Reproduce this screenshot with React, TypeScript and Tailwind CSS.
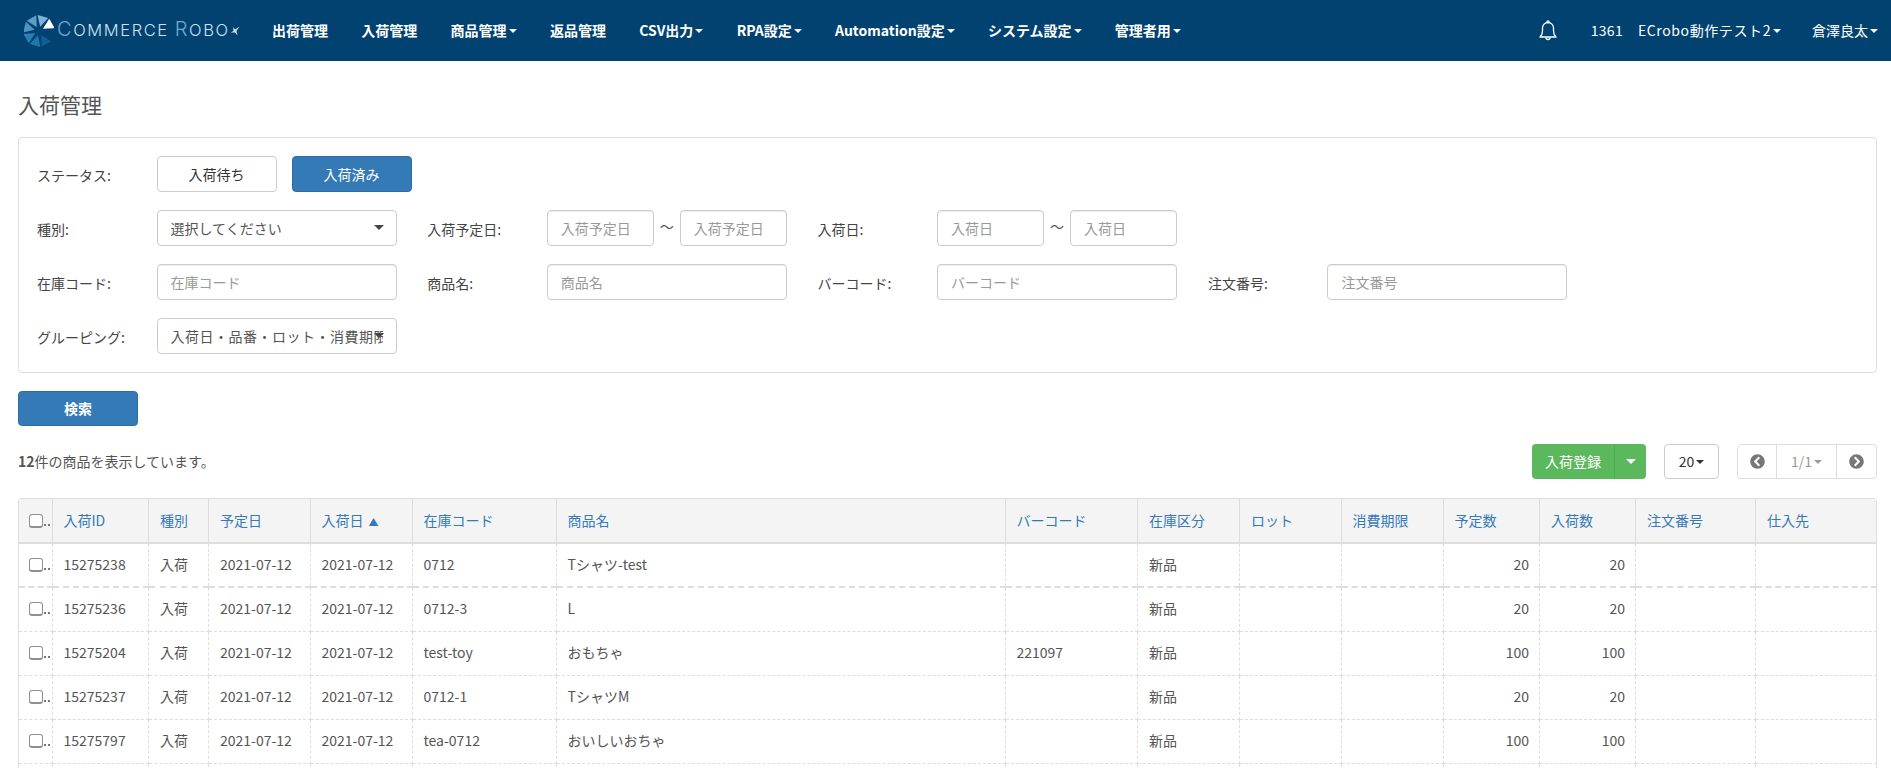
import React from "react";
import { FaChevronCircleLeft, FaChevronCircleRight } from "react-icons/fa";

const menus = [
  { label: "出荷管理" },
  { label: "入荷管理" },
  { label: "商品管理", caret: true },
  { label: "返品管理" },
  { label: "CSV出力", caret: true },
  { label: "RPA設定", caret: true },
  { label: "Automation設定", caret: true },
  { label: "システム設定", caret: true },
  { label: "管理者用", caret: true },
];

const columns = [
  { label: "", width: "w-[33px]" },
  { label: "入荷ID", width: "w-[96.5px]" },
  { label: "種別", width: "w-[60px]" },
  { label: "予定日", width: "w-[101.5px]" },
  { label: "入荷日", width: "w-[102px]", sorted: true },
  { label: "在庫コード", width: "w-[144px]" },
  { label: "商品名", width: "w-[449px]" },
  { label: "バーコード", width: "w-[132.5px]" },
  { label: "在庫区分", width: "w-[102px]" },
  { label: "ロット", width: "w-[101.5px]" },
  { label: "消費期限", width: "w-[102px]" },
  { label: "予定数", width: "w-[96.5px]" },
  { label: "入荷数", width: "w-[96px]" },
  { label: "注文番号", width: "w-[120px]" },
  { label: "仕入先", width: "w-[121px]" },
];

const rows = [
  { id: "15275238", code: "0712", name: "Tシャツ-test", barcode: "", planned: 20, received: 20 },
  { id: "15275236", code: "0712-3", name: "L", barcode: "", planned: 20, received: 20 },
  { id: "15275204", code: "test-toy", name: "おもちゃ", barcode: "221097", planned: 100, received: 100 },
  { id: "15275237", code: "0712-1", name: "TシャツM", barcode: "", planned: 20, received: 20 },
  { id: "15275797", code: "tea-0712", name: "おいしいおちゃ", barcode: "", planned: 100, received: 100 },
];

const Caret = ({ className = "border-t-white" }: { className?: string }) => (
  <span className={`ml-[2px] inline-block h-0 w-0 border-x-[4px] border-t-[4px] border-x-transparent ${className}`} />
);

const Logo = () => {
  const wedges = [
    { angle: 15, color: "#7fb2d8" },
    { angle: 60, color: "#ffffff" },
    { angle: 150, color: "#0f5f92" },
    { angle: 195, color: "#1f78ab" },
    { angle: 240, color: "#2a7fb4" },
    { angle: 285, color: "#4f93c2" },
    { angle: 330, color: "#5f9cc8" },
  ];
  return (
    <div className="flex w-[216px] shrink-0 items-center">
      <svg width="30" height="32" viewBox="-15 -16 30 32" className="shrink-0">
        {wedges.map((w) => (
          <polygon key={w.angle} points="0,-4.5 -5.5,-15 5.5,-15" fill={w.color} transform={`rotate(${w.angle})`} />
        ))}
      </svg>
      <div className="ml-[3px] flex items-baseline font-['Inter',sans-serif] text-[16.5px] font-light tracking-[1.6px] whitespace-nowrap text-[#cfe1ee]">
        <span className="text-[20px] text-[#6fa9d2]">C</span>
        <span>OMMERCE</span>
        <span className="ml-[6px] text-[20px] text-[#6fa9d2]">R</span>
        <span>OBO</span>
        <svg width="10" height="10" viewBox="0 0 10 10" className="mb-[12px]">
          <path d="M5 3.5 L9.5 .5 L6.5 5 L7.5 9.5 L5 6.5 L.5 6.5 L3.5 5 L3 1Z" fill="#cfe1ee" />
        </svg>
      </div>
    </div>
  );
};

const Bell = () => (
  <svg width="18" height="21" viewBox="0 0 18 21" fill="none" stroke="white" strokeWidth="1.3">
    <path d="M1 17c1.7-1.6 2.5-3.2 2.5-6V8a5.5 5.5 0 0 1 11 0v3c0 2.8.8 4.4 2.5 6z" strokeLinejoin="round" />
    <circle cx="9" cy="1.8" r="1" />
    <path d="M7 17.5a2 2 0 0 0 4 0" />
  </svg>
);

const Navbar = () => (
  <nav className="flex h-[61px] items-center bg-[#024270] pr-[13px] pl-[24px] text-[14px] font-bold whitespace-nowrap text-white">
    <Logo />
    <ul className="ml-[32px] flex items-center gap-[33.3px]">
      {menus.map((m) => (
        <li key={m.label} className="flex items-center">
          {m.label}
          {m.caret && <Caret />}
        </li>
      ))}
    </ul>
    <div className="ml-auto flex items-center font-normal">
      <Bell />
      <span className="ml-[34px] tracking-[0.3px]">1361</span>
      <span className="ml-[15px] flex items-center tracking-[0.6px]">
        ECrobo動作テスト2
        <Caret />
      </span>
      <span className="ml-[31px] flex items-center">
        倉澤良太
        <Caret />
      </span>
    </div>
  </nav>
);

const Field = ({ label, children }: { label: string; children?: React.ReactNode }) => (
  <div className="flex items-center">
    <label className="w-[119.5px] shrink-0 pt-[2px] text-[#444]">{label}</label>
    <div className="flex w-[240px] items-center">{children}</div>
  </div>
);

const inputClass =
  "h-[36px] w-full min-w-0 rounded-[4px] border border-[#ccc] bg-white px-[13px] text-[14px] text-[#555] shadow-[inset_0_1px_1px_rgba(0,0,0,0.075)] outline-none placeholder:text-[#999]";

const TextInput = ({ placeholder }: { placeholder: string }) => (
  <input className={inputClass} placeholder={placeholder} readOnly />
);

const DateRange = ({ placeholder }: { placeholder: string }) => (
  <>
    <TextInput placeholder={placeholder} />
    <span className="w-[26px] shrink-0 pb-[3px] text-center text-[#555]">〜</span>
    <TextInput placeholder={placeholder} />
  </>
);

const SelectBox = ({ value, textClass = "" }: { value: string; textClass?: string }) => (
  <div className="relative flex h-[36px] w-full items-center rounded-[4px] border border-[#ccc] bg-white pl-[13px] text-[#555]">
    <span className={`w-[212px] overflow-hidden whitespace-nowrap ${textClass}`}>{value}</span>
    <span className="absolute top-[14px] right-[12px] h-0 w-0 border-x-[5px] border-t-[5px] border-x-transparent border-t-[#444]" />
  </div>
);

const SearchPanel = () => (
  <div className="rounded-[4px] border border-[#ddd] pt-[18px] pr-[19px] pb-[18px] pl-[18px]">
    <div className="grid grid-cols-[repeat(4,390.3px)] gap-y-[18px]">
      <div className="col-span-4 flex items-center">
        <label className="w-[119.5px] shrink-0 pt-[2px] text-[#444]">ステータス:</label>
        <button className="h-[36px] w-[120px] rounded-[4px] border border-[#ccc] bg-white text-[#333]">入荷待ち</button>
        <button className="ml-[15px] h-[36px] w-[120px] rounded-[4px] border border-[#2e6da4] bg-[#337ab7] text-white">入荷済み</button>
      </div>
      <Field label="種別:">
        <SelectBox value="選択してください" />
      </Field>
      <Field label="入荷予定日:">
        <DateRange placeholder="入荷予定日" />
      </Field>
      <Field label="入荷日:">
        <DateRange placeholder="入荷日" />
      </Field>
      <div />
      <Field label="在庫コード:">
        <TextInput placeholder="在庫コード" />
      </Field>
      <Field label="商品名:">
        <TextInput placeholder="商品名" />
      </Field>
      <Field label="バーコード:">
        <TextInput placeholder="バーコード" />
      </Field>
      <Field label="注文番号:">
        <TextInput placeholder="注文番号" />
      </Field>
      <Field label="グルーピング:">
        <SelectBox value="入荷日・品番・ロット・消費期限" textClass="tracking-[0.5px]" />
      </Field>
    </div>
  </div>
);

const Toolbar = () => (
  <div className="mt-[18px] flex h-[35px] items-center">
    <span className="text-[#555]">
      <b>12</b>件の商品を表示しています。
    </span>
    <div className="ml-auto flex h-full items-stretch">
      <div className="flex w-[114px] overflow-hidden rounded-[4px] bg-[#5cb85c] text-white">
        <span className="flex w-[83px] items-center justify-center border-r border-[#4cae4c]">入荷登録</span>
        <span className="flex flex-1 items-center justify-center">
          <span className="h-0 w-0 border-x-[5px] border-t-[5px] border-x-transparent border-t-white" />
        </span>
      </div>
      <div className="ml-[18px] flex w-[55px] items-center justify-center rounded-[4px] border border-[#ccc] bg-white text-[#333]">
        20
        <Caret className="border-t-[#333]" />
      </div>
      <div className="ml-[18px] flex w-[140px] items-stretch rounded-[4px] border border-[#ddd] bg-white text-[#777]">
        <span className="flex w-[39px] items-center justify-center border-r border-[#ddd]">
          <FaChevronCircleLeft size={15} />
        </span>
        <span className="flex w-[60px] items-center justify-center border-r border-[#ddd] text-[#999]">
          1/1
          <Caret className="border-t-[#999]" />
        </span>
        <span className="flex flex-1 items-center justify-center">
          <FaChevronCircleRight size={15} />
        </span>
      </div>
    </div>
  </div>
);

const Check = () => (
  <span className="mt-[1px] flex items-center">
    <input
      type="checkbox"
      readOnly
      className="h-[14px] w-[14px] shrink-0 appearance-none rounded-[3px] border border-b-2 border-[#8f8f8f] bg-white"
    />
    <span className="ml-[1px] flex gap-[2px] self-end pb-[2px]">
      <span className="h-[2px] w-[2px] bg-[#777]" />
      <span className="h-[2px] w-[2px] bg-[#777]" />
    </span>
  </span>
);

const thClass = "h-[44px] overflow-hidden border-r border-b-2 border-[#ddd] pl-[11px] text-left font-normal whitespace-nowrap text-[#337ab7] last:border-r-0";

const DataTable = () => {
  const cell = (i: number, last = false) =>
    `h-[44px] overflow-hidden border-dashed border-[#ddd] pl-[11px] pr-[10px] pb-[2px] whitespace-nowrap ${i === 0 ? "border-b-2" : "border-b"} ${last ? "" : "border-r"}`;
  return (
    <div className="mt-[19px] overflow-hidden rounded-t-[4px] border border-[#ddd] text-[#555]">
      <table className="w-full table-fixed border-collapse">
        <colgroup>
          {columns.map((c) => (
            <col key={c.label} className={c.width} />
          ))}
        </colgroup>
        <thead className="bg-[#f4f4f4]">
          <tr>
            {columns.map((c, i) => (
              <th key={c.label} className={i === 0 ? "h-[44px] border-r border-b-2 border-[#ddd] pl-[10px]" : thClass}>
                {i === 0 ? <Check /> : c.label}
                {c.sorted && <span className="ml-[5px] text-[10px]">▲</span>}
              </th>
            ))}
          </tr>
        </thead>
        <tbody>
          {rows.map((r, i) => (
            <tr key={r.id}>
              <td className={`${cell(i)} !pr-0 !pl-[10px]`}>
                <Check />
              </td>
              <td className={cell(i)}>{r.id}</td>
              <td className={cell(i)}>入荷</td>
              <td className={cell(i)}>2021-07-12</td>
              <td className={cell(i)}>2021-07-12</td>
              <td className={cell(i)}>{r.code}</td>
              <td className={cell(i)}>{r.name}</td>
              <td className={cell(i)}>{r.barcode}</td>
              <td className={cell(i)}>新品</td>
              <td className={cell(i)} />
              <td className={cell(i)} />
              <td className={`${cell(i)} text-right`}>{r.planned}</td>
              <td className={`${cell(i)} text-right`}>{r.received}</td>
              <td className={cell(i)} />
              <td className={cell(i, true)} />
            </tr>
          ))}
          <tr>
            {columns.map((c, i) => (
              <td key={c.label} className={cell(1, i === columns.length - 1)} />
            ))}
          </tr>
        </tbody>
      </table>
    </div>
  );
};

export default function App() {
  return (
    <div className="h-screen overflow-hidden bg-white font-['Noto_Sans_CJK_JP','Liberation_Sans',sans-serif] text-[14px]">
      <Navbar />
      <main className="pr-[14px] pl-[18px]">
        <h3 className="mt-[30px] mb-[20px] text-[21px] leading-[26px] font-normal text-[#555]">入荷管理</h3>
        <SearchPanel />
        <button className="mt-[18px] h-[35px] w-[120px] rounded-[4px] border border-[#2e6da4] bg-[#337ab7] font-bold text-white">検索</button>
        <Toolbar />
        <DataTable />
      </main>
    </div>
  );
}
